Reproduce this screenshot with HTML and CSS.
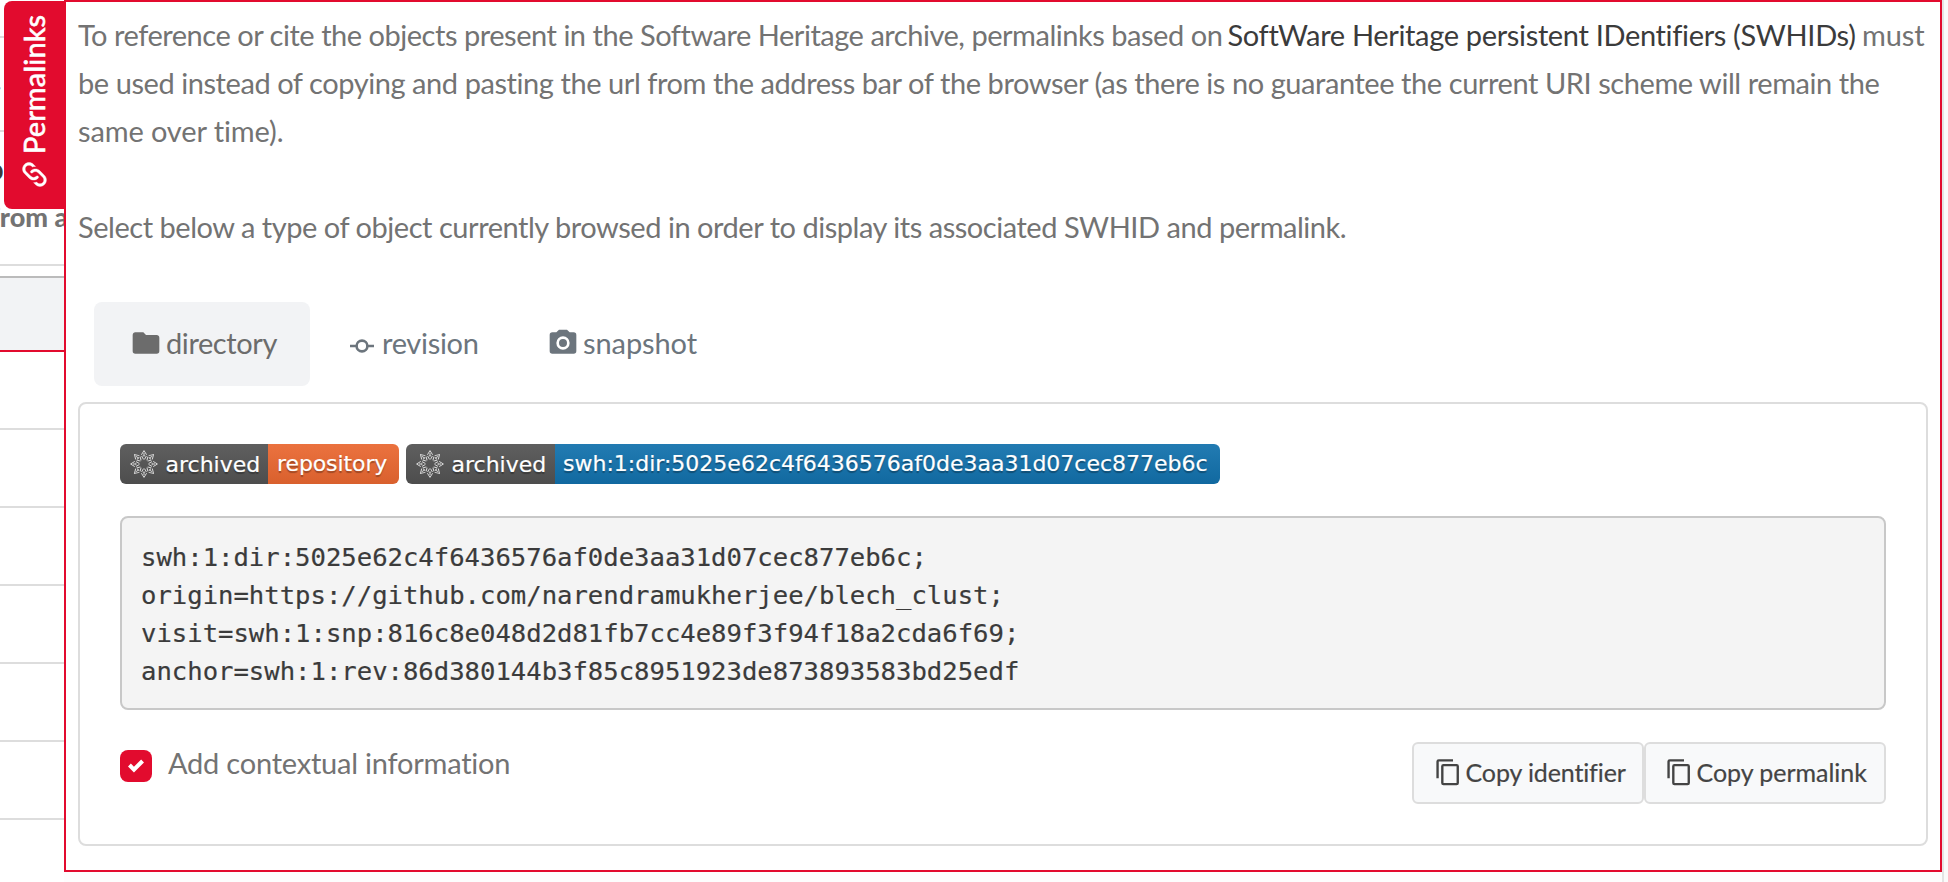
FILE: index.html
```html
<!DOCTYPE html>
<html lang="en">
<head>
<meta charset="utf-8">
<title>Permalinks</title>
<link rel="stylesheet" href="styles.css">
</head>
<body>
<svg class="defs" aria-hidden="true">
  <defs>
    <symbol id="copy" viewBox="0 0 24 24"><path d="M19,21H8V7H19M19,5H8A2,2 0 0,0 6,7V21A2,2 0 0,0 8,23H19A2,2 0 0,0 21,21V7A2,2 0 0,0 19,5M16,1H4A2,2 0 0,0 2,3V17H4V3H16V1Z"/></symbol>
    <g id="ray"><path d="M-2.6,-9.2L0,-13.4L2.6,-9.2M-2.4,-8L-.5,-4.6M2.4,-8L.5,-4.6M0,-11V-8.8M-1.2,-8.2H1.2"/></g>
    <symbol id="swh" viewBox="-14 -14 28 28">
      <g fill="none" stroke="#e0e0e0" stroke-width=".95">
        <use href="#ray"/><use href="#ray" transform="rotate(45)"/><use href="#ray" transform="rotate(90)"/><use href="#ray" transform="rotate(135)"/>
        <use href="#ray" transform="rotate(180)"/><use href="#ray" transform="rotate(225)"/><use href="#ray" transform="rotate(270)"/><use href="#ray" transform="rotate(315)"/>
      </g>
    </symbol>
  </defs>
</svg>

<aside class="backdrop">
  <div class="cell cell-first"></div>
  <div class="cell cell-meta">.</div>
  <div class="cell cell-title"><span class="clip-dark">p</span><span class="clip-text">from a</span></div>
  <div class="gap"></div>
  <div class="cell-head"></div>
  <div class="cell row"></div>
  <div class="cell row"></div>
  <div class="cell row"></div>
  <div class="cell row"></div>
  <div class="cell row"></div>
  <div class="cell row"></div>
  <div class="handle">
    <svg class="handle-icon" viewBox="0 0 24 24"><path d="M10.59,13.41C11,13.8 11,14.44 10.59,14.83C10.2,15.22 9.56,15.22 9.17,14.83C7.22,12.88 7.22,9.71 9.17,7.76V7.76L12.71,4.22C14.66,2.27 17.83,2.27 19.78,4.22C21.73,6.17 21.73,9.34 19.78,11.29L18.29,12.78C18.3,11.96 18.17,11.14 17.89,10.36L18.36,9.88C19.54,8.71 19.54,6.81 18.36,5.64C17.19,4.46 15.29,4.46 14.12,5.64L10.59,9.17C9.41,10.34 9.41,12.24 10.59,13.41M13.41,9.17C13.8,8.78 14.44,8.78 14.83,9.17C16.78,11.12 16.78,14.29 14.83,16.24V16.24L11.29,19.78C9.34,21.73 6.17,21.73 4.22,19.78C2.27,17.83 2.27,14.66 4.22,12.71L5.71,11.22C5.7,12.04 5.83,12.86 6.11,13.65L5.64,14.12C4.46,15.29 4.46,17.19 5.64,18.36C6.81,19.54 8.71,19.54 9.88,18.36L13.41,14.83C14.59,13.66 14.59,11.76 13.41,10.59C13,10.2 13,9.56 13.41,9.17Z"/></svg>
    <span class="handle-label">Permalinks</span>
  </div>
</aside>

<main class="panel">
  <p class="intro">
    <span class="line"><span class="seg-a">To reference or cite the objects present in the Software Heritage archive, permalinks based on</span><a class="seg-link">SoftWare Heritage persistent IDentifiers (SWHIDs)</a><span class="seg-b">must</span></span>
    <span class="line line-2">be used instead of copying and pasting the url from the address bar of the browser (as there is no guarantee the current URI scheme will remain the</span>
    <span class="line line-3">same over time).</span>
  </p>
  <p class="intro select">Select below a type of object currently browsed in order to display its associated SWHID and permalink.</p>

  <nav class="tabs">
    <a class="tab tab-directory active"><svg class="tab-icon" viewBox="0 0 24 24"><path d="M10,4H4C2.89,4 2,4.89 2,6V18A2,2 0 0,0 4,20H20A2,2 0 0,0 22,18V8C22,6.89 21.1,6 20,6H12L10,4Z"/></svg><span>directory</span></a>
    <a class="tab tab-revision"><svg class="commit-icon" viewBox="0 0 24 14"><path d="M0,7H6M18,7H24" /><circle cx="12" cy="7" r="5.4"/></svg><span>revision</span></a>
    <a class="tab tab-snapshot"><svg class="tab-icon" viewBox="0 0 24 24"><path d="M4,4H7L9,2H15L17,4H20A2,2 0 0,1 22,6V18A2,2 0 0,1 20,20H4A2,2 0 0,1 2,18V6A2,2 0 0,1 4,4M12,7A5,5 0 0,0 7,12A5,5 0 0,0 12,17A5,5 0 0,0 17,12A5,5 0 0,0 12,7M12,9A3,3 0 0,1 15,12A3,3 0 0,1 12,15A3,3 0 0,1 9,12A3,3 0 0,1 12,9Z"/></svg><span>snapshot</span></a>
  </nav>

  <section class="card">
    <div class="badges">
      <span class="badge"><span class="badge-key"><svg class="swh"><use href="#swh"/></svg>archived</span><span class="badge-val orange">repository</span></span>
      <span class="badge"><span class="badge-key wide"><svg class="swh"><use href="#swh"/></svg>archived</span><span class="badge-val blue">swh:1:dir:5025e62c4f6436576af0de3aa31d07cec877eb6c</span></span>
    </div>
    <pre class="swhid">swh:1:dir:5025e62c4f6436576af0de3aa31d07cec877eb6c;
origin=https://github.com/narendramukherjee/blech_clust;
visit=swh:1:snp:816c8e048d2d81fb7cc4e89f3f94f18a2cda6f69;
anchor=swh:1:rev:86d380144b3f85c8951923de873893583bd25edf</pre>
    <div class="actions">
      <label class="context"><span class="check"><svg viewBox="0 0 8 8"><path d="M6.564.75l-3.59 3.612-1.538-1.55L0 4.26l2.974 2.99L8 2.193z"/></svg></span><span class="context-label">Add contextual information</span></label>
      <div class="buttons">
        <button class="btn btn-id"><svg class="copy"><use href="#copy"/></svg><span>Copy identifier</span></button>
        <button class="btn btn-link"><svg class="copy"><use href="#copy"/></svg><span>Copy permalink</span></button>
      </div>
    </div>
  </section>
</main>
<div class="rail"></div>
</body>
</html>
```
FILE: styles.css
```css
* { box-sizing: border-box; }
body {
  margin: 0;
  height: 882px;
  display: flex;
  align-items: flex-start;
  overflow: hidden;
  background: #fdfdfd;
  color: #737373;
  font: 29px/48px Lato, "Noto Sans", sans-serif;
}
.defs { position: absolute; width: 0; height: 0; }

.backdrop { position: relative; width: 64px; height: 882px; flex: none; background: #fff; overflow: hidden; }
.cell { border-bottom: 2px solid #ddd; overflow: hidden; }
.cell-first { height: 38px; }
.cell-meta { height: 94px; padding-top: 17px; text-indent: -5px; line-height: 48px; }
.cell-title { height: 134px; padding-top: 13px; font-weight: 900; }
.cell-title span { display: block; white-space: nowrap; height: 48px; }
.clip-dark { color: #3b3b3b; margin-left: -13px; }
.clip-text { margin-left: -10px; font-size: 27px; }
.gap { height: 10px; }
.cell-head { height: 76px; background: #f2f3f5; border-top: 2px solid #bbb; border-bottom: 2px solid #e20b2e; }
.row { height: 78px; }

.handle {
  position: absolute;
  left: 4px;
  top: 1px;
  width: 60px;
  height: 208px;
  padding: 19px 0 0;
  display: flex;
  align-items: center;
  writing-mode: vertical-rl;
  transform: rotate(180deg);
  background: #e20b2e;
  border-radius: 0 8px 8px 0;
  color: #fff;
}
.handle-icon { width: 31px; height: 31px; margin-right: 2px; fill: #fff; stroke: #fff; stroke-width: .3; transform: rotate(90deg); }
.handle-label { margin-top: 5px; letter-spacing: .12px; line-height: 60px; -webkit-text-stroke: .6px #fff; }

.panel { width: 1878px; height: 872px; flex: none; border: 2px solid #e20b2e; background: #fff; padding: 9px 12px 0; }
.intro { margin: 0; white-space: nowrap; }
.line { display: flex; height: 48px; letter-spacing: -.432px; }
.seg-a { width: 1149.5px; letter-spacing: -.472px; }
.seg-link { width: 634.5px; color: #3b3b3b; letter-spacing: -.335px; }
.seg-b { letter-spacing: -.1px; }
.line-3 { letter-spacing: -.12px; }
.select { margin-top: 48px; letter-spacing: -.467px; }

.tabs { display: flex; margin: 51px 16px 0; height: 84px; color: #6c757d; }
.tab { display: flex; align-items: center; height: 84px; padding-bottom: 2px; border-radius: 8px; }
.tab svg { flex: none; }
.tab-directory { width: 216px; padding-left: 36px; letter-spacing: -.4px; }
.active { background: #f2f3f5; color: #6c6c6c; }
.tab-revision { width: 216px; padding-left: 40px; letter-spacing: -.3px; }
.tab-snapshot { padding-left: 21px; letter-spacing: -.09px; }
.tab-icon { width: 32px; height: 32px; fill: currentColor; margin: -1px 4px 0 0; }
.commit-icon { width: 24px; height: 14px; margin: 6px 8px 0 0; fill: none; stroke: currentColor; stroke-width: 2.6; }

.card { margin-top: 16px; height: 444px; border: 2px solid #ddd; border-radius: 8px; padding: 40px; }
.badges { display: flex; gap: 7px; height: 40px; }
.badge { display: flex; height: 40px; border-radius: 6px; overflow: hidden; color: #fff; font: 22px/39px "DejaVu Sans", Verdana, sans-serif; text-shadow: 0 2px 1px rgba(0,0,0,.3); -webkit-text-stroke: .2px #fff; }
.badge-key { width: 148px; display: flex; align-items: center; padding-left: 10px; background: linear-gradient(#5f5f5f, #4d4d4d); }
.badge-key.wide { width: 149px; }
.swh { width: 28px; height: 28px; margin-right: 7.5px; }
.badge-val { padding-left: 8px; }
.orange { width: 131px; background: linear-gradient(#eb723f, #d9602d); padding-left: 9px; letter-spacing: -.1px; }
.blue { width: 665px; background: linear-gradient(#227bb2, #1169a0); }

.swhid {
  margin: 32px 0 0;
  height: 194px;
  padding: 20px 19px;
  border: 2px solid #c8c8c8;
  border-radius: 8px;
  background: #f4f4f4;
  color: #3b3b3b;
  font: 25.6px/38px "DejaVu Sans Mono", monospace;
  -webkit-text-stroke: .2px #3b3b3b;
}
.actions { display: flex; justify-content: space-between; margin-top: 32px; }
.context { display: flex; }
.check { width: 32px; height: 32px; margin-top: 8px; border-radius: 8px; background: #e20b2e; display: flex; align-items: center; justify-content: center; }
.check svg { width: 16px; height: 16px; fill: #fff; }
.context-label { margin: -3px 0 0 16px; letter-spacing: -.22px; }
.buttons { display: flex; }
.btn {
  height: 62px;
  display: flex;
  align-items: center;
  padding: 0 0 2px 20px;
  border: 2px solid #ddd;
  border-radius: 6px;
  background: #f8f9fa;
  color: #444;
  font: 25px/37px Lato, "Noto Sans", sans-serif;
  -webkit-text-stroke: .2px #444;
  white-space: nowrap;
}
.btn svg { stroke: none; }
.btn-id { width: 232px; letter-spacing: -.12px; }
.btn-link { width: 242px; letter-spacing: -.03px; padding-left: 19px; }
.copy { width: 28.5px; height: 28.5px; margin: 0 3px 0 0; fill: currentColor; }

.rail { width: 6px; height: 882px; flex: none; background: #fafafa; border-left: 2px solid #e4e4e4; }
```
